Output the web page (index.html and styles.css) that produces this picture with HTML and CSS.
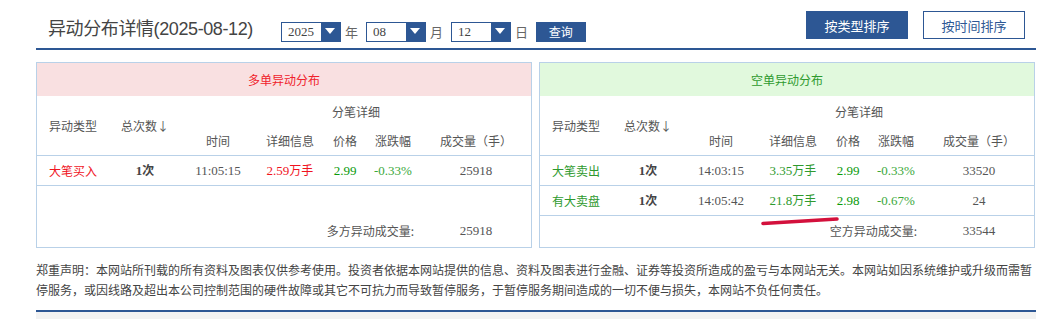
FILE: index.html
```html
<!DOCTYPE html>
<html lang="zh-CN">
<head>
<meta charset="utf-8">
<title>异动分布详情</title>
<link rel="stylesheet" href="styles.css">
</head>
<body>
<div class="wrap">
  <div class="top">
    <h1 class="title">异动分布详情(2025-08-12)</h1>
    <div class="datebar">
      <div class="sel"><span class="val">2025</span><span class="arr"></span></div><span class="unit">年</span>
      <div class="sel"><span class="val">08</span><span class="arr"></span></div><span class="unit">月</span>
      <div class="sel"><span class="val">12</span><span class="arr"></span></div><span class="unit">日</span>
      <button class="qbtn">查询</button>
    </div>
    <div class="sorts">
      <button class="sbtn active">按类型排序</button>
      <button class="sbtn">按时间排序</button>
    </div>
  </div>

  <div class="panels">
    <div class="panel">
      <div class="phead up">多单异动分布</div>
      <table class="tbl">
        <colgroup>
          <col class="c1"><col class="c2"><col class="c3"><col class="c4"><col class="c5"><col class="c6"><col class="c7">
        </colgroup>
        <thead>
          <tr class="h1"><th rowspan="2">异动类型</th><th rowspan="2">总次数↓</th><th colspan="5">分笔详细</th></tr>
          <tr class="h2"><th>时间</th><th>详细信息</th><th>价格</th><th>涨跌幅</th><th>成交量（手）</th></tr>
        </thead>
        <tbody>
          <tr class="row"><td class="red">大笔买入</td><td class="cnt"><span class="n">1</span>次</td><td><span class="n">11:05:15</span></td><td class="red"><span class="n">2.59</span>万手</td><td class="g1"><span class="n">2.99</span></td><td class="g2"><span class="n">-0.33%</span></td><td><span class="n">25918</span></td></tr>
          <tr class="row empty"><td colspan="7"></td></tr>
          <tr class="total"><td colspan="6" class="tlabel">多方异动成交量:</td><td><span class="n">25918</span></td></tr>
        </tbody>
      </table>
    </div>

    <div class="panel">
      <div class="phead down">空单异动分布</div>
      <table class="tbl">
        <colgroup>
          <col class="c1"><col class="c2"><col class="c3"><col class="c4"><col class="c5"><col class="c6"><col class="c7">
        </colgroup>
        <thead>
          <tr class="h1"><th rowspan="2">异动类型</th><th rowspan="2">总次数↓</th><th colspan="5">分笔详细</th></tr>
          <tr class="h2"><th>时间</th><th>详细信息</th><th>价格</th><th>涨跌幅</th><th>成交量（手）</th></tr>
        </thead>
        <tbody>
          <tr class="row"><td class="grn">大笔卖出</td><td class="cnt"><span class="n">1</span>次</td><td><span class="n">14:03:15</span></td><td class="grn"><span class="n">3.35</span>万手</td><td class="g1"><span class="n">2.99</span></td><td class="g2"><span class="n">-0.33%</span></td><td><span class="n">33520</span></td></tr>
          <tr class="row"><td class="grn">有大卖盘</td><td class="cnt"><span class="n">1</span>次</td><td><span class="n">14:05:42</span></td><td class="grn"><span class="n">21.8</span>万手</td><td class="g1"><span class="n">2.98</span></td><td class="g2"><span class="n">-0.67%</span></td><td><span class="n">24</span></td></tr>
          <tr class="total"><td colspan="6" class="tlabel">空方异动成交量:</td><td><span class="n">33544</span></td></tr>
        </tbody>
      </table>
      <svg class="mark" width="80" height="12" viewBox="0 0 80 12"><path d="M2 9.5 L76 5" stroke="#d3103c" stroke-width="3.6" stroke-linecap="round" fill="none"/></svg>
    </div>
  </div>

  <p class="notice">郑重声明：本网站所刊载的所有资料及图表仅供参考使用。投资者依据本网站提供的信息、资料及图表进行金融、证券等投资所造成的盈亏与本网站无关。本网站如因系统维护或升级而需暂停服务，或因线路及超出本公司控制范围的硬件故障或其它不可抗力而导致暂停服务，于暂停服务期间造成的一切不便与损失，本网站不负任何责任。</p>
  <div class="foot"></div>
</div>
</body>
</html>
```

FILE: styles.css
```css
* { box-sizing: border-box; }
html, body { margin: 0; padding: 0; background: #fff; }
body {
  font-family: "Noto Sans CJK SC", sans-serif;
  font-size: 12px;
  color: #555;
}
.wrap {
  width: 1000px;
  margin-left: 36px;
}
.top {
  display: flex;
  align-items: flex-start;
  height: 50px;
  border-bottom: 2px solid #2d5794;
}
.title {
  margin: 17px 0 0 12px;
  font-family: "Liberation Sans", "Noto Sans CJK SC", sans-serif;
  font-weight: normal;
  font-size: 18px;
  line-height: 24px;
  color: #444;
  letter-spacing: -0.4px;
}
.datebar {
  display: flex;
  align-items: center;
  margin: 21px 0 0 28px;
}
.sel {
  display: flex;
  width: 60px;
  height: 20px;
  border: 1px solid #2d5794;
  background: #fff;
}
.sel .val {
  flex: 1;
  padding-left: 6px;
  font-family: "Liberation Serif", serif;
  font-size: 13px;
  line-height: 18px;
  color: #444;
}
.sel .arr {
  width: 19px;
  background: #2d5794;
  display: flex;
  align-items: center;
  justify-content: center;
}
.sel .arr::after {
  content: "";
  border-left: 5px solid transparent;
  border-right: 5px solid transparent;
  border-top: 6px solid #fff;
  margin-top: -1px;
}
.unit {
  width: 25px;
  padding-left: 4px;
  font-size: 13px;
  color: #666;
}
.qbtn {
  margin: 1px 0 0 0;
  width: 50px;
  height: 20px;
  padding: 0;
  border: 0;
  background: #2d5794;
  color: #fff;
  font-family: "Noto Sans CJK SC", sans-serif;
  font-size: 12px;
  line-height: 20px;
}
.sorts {
  display: flex;
  gap: 15px;
  margin: 11px 11px 0 auto;
}
.sbtn {
  width: 102px;
  height: 28px;
  padding: 0;
  border: 1px solid #2d5794;
  background: #fff;
  color: #2d5794;
  font-family: "Noto Sans CJK SC", sans-serif;
  font-size: 13px;
}
.sbtn.active {
  background: #2d5794;
  color: #fff;
}

.panels {
  display: flex;
  gap: 7px;
  margin-top: 12px;
}
.panel {
  position: relative;
  width: 496px;
  height: 186px;
  border: 1px solid #b9d1e8;
}
.phead {
  height: 33px;
  line-height: 33px;
  text-align: center;
  font-size: 12px;
}
.phead.up { background: #f9e0e1; color: #f0222b; }
.phead.down { background: #e1f9dd; color: #2e9a2e; }

.tbl {
  width: 100%;
  border-collapse: collapse;
  table-layout: fixed;
}
.c1 { width: 72px; }
.c2 { width: 72px; }
.c3 { width: 74px; }
.c4 { width: 70px; }
.c5 { width: 40px; }
.c6 { width: 56px; }
.c7 { width: 110px; }
.tbl th {
  font-weight: normal;
  font-size: 12px;
  color: #555;
  padding: 0;
  text-align: center;
}
.tbl .h1 th { height: 30px; }
.tbl .h2 th { height: 29px; vertical-align: middle; }
.tbl thead { border-bottom: 1px solid #b9d1e8; }
.tbl td {
  padding: 0;
  text-align: center;
  height: 30px;
  color: #555;
}
.tbl .n {
  font-family: "Liberation Serif", serif;
  font-size: 13px;
}
.tbl .row { border-bottom: 1px solid #b9d1e8; }
.tbl .row.empty { border-bottom-color: transparent; }
.tbl .total td { height: 30px; }
.tbl td.tlabel {
  text-align: right;
  padding-right: 7px;
  color: #555;
}
.tbl td.red { color: #f0141e; }
.tbl td.grn { color: #2e9a2e; }
.tbl td.g1 { color: #0a9a0a; }
.tbl td.g2 { color: #3aa83a; }
.tbl td.cnt { font-weight: bold; color: #444; }

.mark {
  position: absolute;
  left: 221px;
  top: 151px;
}

.notice {
  margin: 12px 0 0 0;
  font-size: 12px;
  line-height: 20px;
  color: #444;
}
.foot {
  margin-top: 10px;
  height: 12px;
  border-top: 2px solid #2d5794;
  background: #f2f2f2;
}
```
